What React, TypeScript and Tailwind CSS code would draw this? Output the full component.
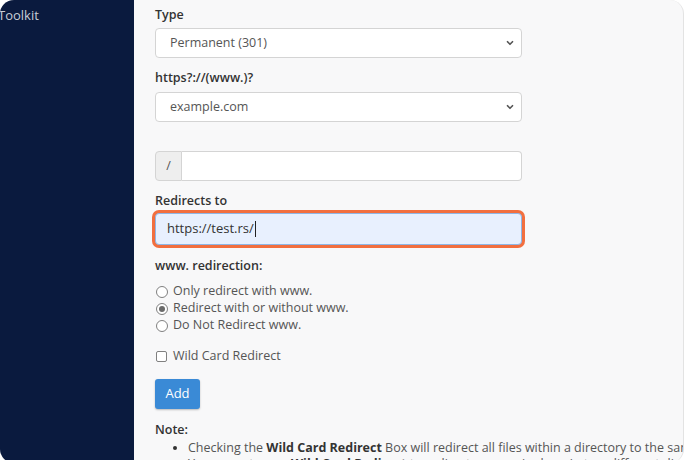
import { ChevronDown } from "lucide-react";

const radios = [
  { label: "Only redirect with www.", checked: false },
  { label: "Redirect with or without www.", checked: true },
  { label: "Do Not Redirect www.", checked: false },
];

const Label = ({ children, className = "" }: { children: React.ReactNode; className?: string }) => (
  <div className={`h-[20px] leading-[20px] font-semibold text-[#333] ${className}`}>{children}</div>
);

const FakeSelect = ({ value, className = "" }: { value: string; className?: string }) => (
  <div
    className={`w-[367px] h-[30px] flex items-center justify-between pl-[14px] pr-[6px] bg-white border border-[#d4d4d4] rounded-[4px] ${className}`}
  >
    <span>{value}</span>
    <ChevronDown className="w-[10px] h-[10px] text-[#555]" strokeWidth={4} />
  </div>
);

export default function App() {
  return (
    <div className="w-[686px] h-[460px] bg-white overflow-hidden font-['Open_Sans',sans-serif]">
      <div className="w-[684px] h-[463px] flex overflow-hidden rounded-[14px] border-r border-[#e3e3e3] bg-[#f8f8f9]">
        <aside className="w-[134px] shrink-0 bg-[#0a1a3e]">
          <div className="-ml-[2px] pt-[5px] leading-[20px] text-[13px] text-[#c8cdd8]">Toolkit</div>
        </aside>

        <main className="flex-1 pl-[21px] pt-[5px] text-[12.5px] text-[#555] whitespace-nowrap overflow-hidden">
          <Label>Type</Label>
          <FakeSelect value="Permanent (301)" className="mt-[3px]" />

          <Label className="mt-[10px]">https?://(www.)?</Label>
          <FakeSelect value="example.com" className="mt-[4px]" />

          <div className="mt-[29px] w-[367px] h-[30px] flex">
            <div className="w-[27px] flex items-center justify-center bg-[#eeeeee] border border-[#d4d4d4] rounded-l-[4px]">
              /
            </div>
            <div className="flex-1 bg-white border border-l-0 border-[#d4d4d4] rounded-r-[4px]" />
          </div>

          <Label className="mt-[10px]">Redirects to</Label>
          <div className="mt-[2px] w-[367px] h-[32px] flex items-center pl-[11px] bg-[#e8f0fe] border border-[#8fb6e6] rounded-[4px] ring-[3px] ring-[#f26f3f] text-[13px] text-[#333]">
            https://test.rs/<span className="ml-px w-px h-[16px] bg-[#222]" />
          </div>

          <Label className="mt-[11px]">www. redirection:</Label>
          <div className="mt-[7px]">
            {radios.map((r) => (
              <div key={r.label} className="h-[17px] flex items-center">
                <span className="w-[12px] h-[12px] ml-[1px] rounded-full border border-[#808080] bg-white flex items-center justify-center">
                  {r.checked && <span className="w-[6px] h-[6px] rounded-full bg-[#6a6a6a]" />}
                </span>
                <span className="ml-[5px]">{r.label}</span>
              </div>
            ))}
          </div>

          <div className="mt-[14px] h-[17px] flex items-center">
            <span className="w-[11px] h-[11px] ml-[1px] rounded-[2px] border border-[#808080] bg-white" />
            <span className="ml-[6px]">Wild Card Redirect</span>
          </div>

          <button className="mt-[14px] w-[45px] h-[30px] rounded-[3px] bg-[#3a8ad6] text-white text-[13px] shadow-[0_1px_2px_rgba(0,0,0,0.25)]">
            Add
          </button>

          <Label className="mt-[11px]">Note:</Label>
          <ul className="list-disc pl-[33px] leading-[16px] text-[12.5px] text-[#555] marker:text-[#333]">
            <li>
              Checking the <b className="font-bold text-[#333]">Wild Card Redirect</b> Box will redirect all files
              within a directory to the same filename in the redirected directory.
            </li>
            <li>
              You cannot use a <b className="font-bold text-[#333]">Wild Card Redirect</b> to redirect your main domain
              to a different directory on your site.
            </li>
          </ul>
        </main>
      </div>
    </div>
  );
}
